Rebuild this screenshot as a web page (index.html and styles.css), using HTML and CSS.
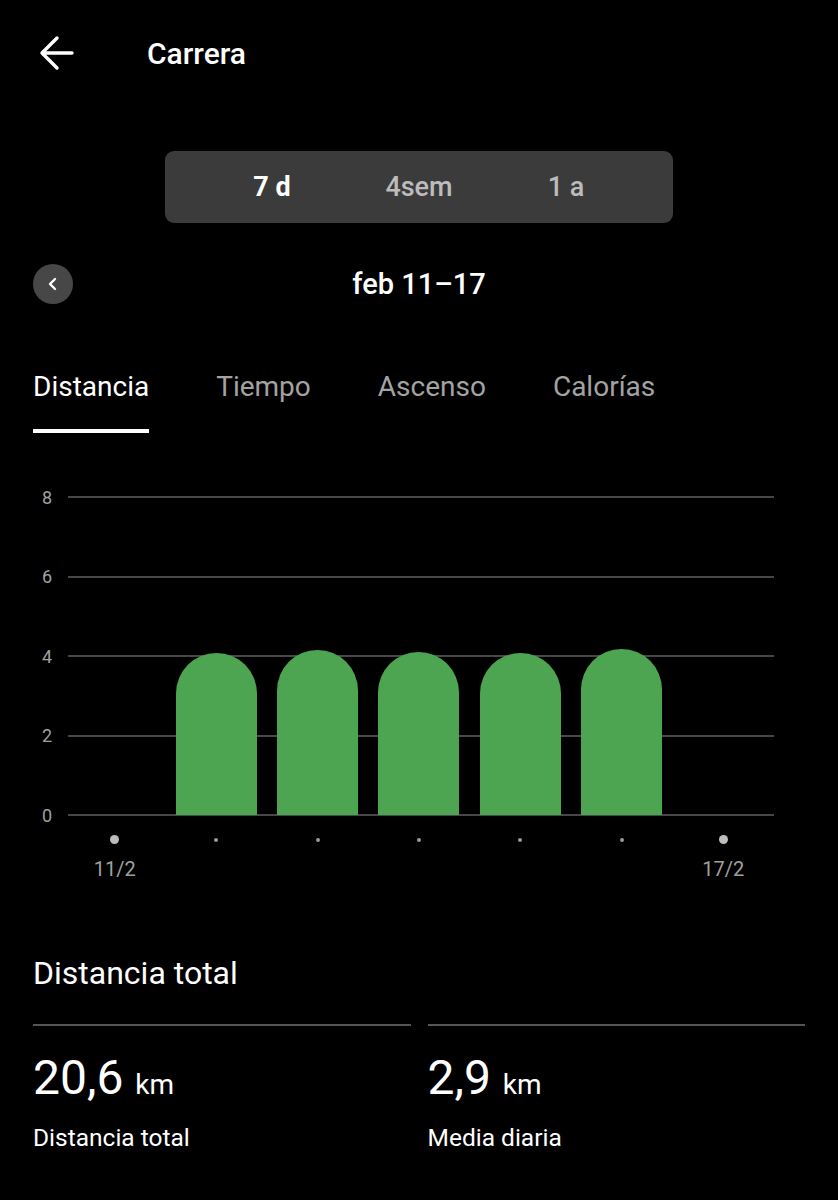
FILE: index.html
```html
<!DOCTYPE html>
<html lang="es">
<head>
    <meta charset="UTF-8">
    <meta name="viewport" content="width=device-width, initial-scale=1.0">
    <title>Carrera</title>
    <link rel="stylesheet" href="styles.css">
</head>
<body>
    <div id="cabecera">
        <svg class="atras" width="36" height="36" viewBox="0 0 36 36">
            <path d="M33 18 H3 M18 3 L3 18 L18 33" fill="none" stroke="#fff" stroke-width="3.4" stroke-linecap="round" stroke-linejoin="round"/>
        </svg>
        <h1>Carrera</h1>
    </div>

    <div id="periodos">
        <div class="periodo activo">7 d</div>
        <div class="periodo">4sem</div>
        <div class="periodo">1 a</div>
    </div>

    <div id="fecha">
        <div class="circulo">
            <svg width="14" height="14" viewBox="0 0 14 14">
                <path d="M9 2 L4 7 L9 12" fill="none" stroke="#fff" stroke-width="2.4" stroke-linecap="round" stroke-linejoin="round"/>
            </svg>
        </div>
        <div class="rango">feb 11–17</div>
        <div></div>
    </div>

    <div id="pestanas">
        <div class="pestana activa">Distancia</div>
        <div class="pestana">Tiempo</div>
        <div class="pestana">Ascenso</div>
        <div class="pestana">Calorías</div>
    </div>

    <!-- Gráfico de barras -->
    <div id="grafico">
        <div class="lineas">
            <div class="linea"><span class="eje">8</span><span class="trazo"></span></div>
            <div class="linea"><span class="eje">6</span><span class="trazo"></span></div>
            <div class="linea"><span class="eje">4</span><span class="trazo"></span></div>
            <div class="linea"><span class="eje">2</span><span class="trazo"></span></div>
            <div class="linea"><span class="eje">0</span><span class="trazo"></span></div>
        </div>
        <div class="barras">
            <div class="col"></div>
            <div class="col"><div class="barra" style="height: 162px"></div></div>
            <div class="col"><div class="barra" style="height: 165px"></div></div>
            <div class="col"><div class="barra" style="height: 163px"></div></div>
            <div class="col"><div class="barra" style="height: 162px"></div></div>
            <div class="col"><div class="barra" style="height: 166px"></div></div>
            <div class="col"></div>
        </div>
    </div>

    <div class="dias puntos">
        <span><i class="punto grande"></i></span>
        <span><i class="punto"></i></span>
        <span><i class="punto"></i></span>
        <span><i class="punto"></i></span>
        <span><i class="punto"></i></span>
        <span><i class="punto"></i></span>
        <span><i class="punto grande"></i></span>
    </div>
    <div class="dias etiquetas">
        <span>11/2</span>
        <span></span>
        <span></span>
        <span></span>
        <span></span>
        <span></span>
        <span>17/2</span>
    </div>

    <h2>Distancia total</h2>
    <div id="resumen">
        <div class="dato">
            <div class="valor">20,6 <small>km</small></div>
            <div class="nombre">Distancia total</div>
        </div>
        <div class="dato">
            <div class="valor">2,9 <small>km</small></div>
            <div class="nombre">Media diaria</div>
        </div>
    </div>
</body>
</html>
```

FILE: styles.css
```css
body {
    margin: 0;
    background: #000;
    color: #fff;
    font-family: Roboto, 'Noto Sans', sans-serif;
}

#cabecera {
    display: flex;
    align-items: center;
    height: 106px;
    padding-left: 39px;
}

#cabecera h1 {
    margin: 0 0 0 72px;
    font-size: 30px;
    font-weight: 500;
}

/* Selector de periodo */
#periodos {
    display: grid;
    grid-template-columns: repeat(3, 147px);
    justify-content: center;
    align-items: center;
    width: 508px;
    height: 72px;
    margin: 45px auto 0;
    background: #3b3b3b;
    border-radius: 9px;
}

.periodo {
    text-align: center;
    font-size: 27px;
    font-weight: 500;
    color: #bcbcbc;
}

.periodo.activo { color: #fff; font-weight: 700; }

#fecha {
    display: grid;
    grid-template-columns: 1fr auto 1fr;
    align-items: center;
    margin-top: 41px;
    padding: 0 33px;
}

.circulo {
    display: flex;
    justify-content: center;
    align-items: center;
    width: 40px;
    height: 40px;
    border-radius: 50%;
    background: #474747;
}

.rango { font-size: 29px; font-weight: 500; }

/* Pestañas */
#pestanas {
    display: flex;
    gap: 67px;
    margin-top: 66px;
    padding-left: 33px;
}

.pestana {
    font-size: 28px;
    line-height: 34px;
    color: #a3a3a3;
    padding-bottom: 25px;
    border-bottom: 4px solid transparent;
}

.pestana.activa { color: #fff; border-bottom-color: #fff; }

/* Gráfico */
#grafico {
    position: relative;
    height: 320px;
    margin-top: 63px;
}

.lineas {
    display: flex;
    flex-direction: column;
    justify-content: space-between;
    height: 100%;
    padding-right: 64px;
}

.linea {
    display: flex;
    align-items: center;
    height: 2px;
}

.eje {
    width: 28px;
    margin: 0 7px 0 33px;
    text-align: center;
    font-size: 18px;
    color: #a0a0a0;
}

.trazo {
    flex: 1;
    height: 2px;
    background: #474747;
}

.barras {
    position: absolute;
    top: 0;
    bottom: 1px;
    left: 64px;
    right: 64px;
    display: grid;
    grid-template-columns: repeat(7, 1fr);
}

.col {
    display: flex;
    justify-content: center;
    align-items: flex-end;
}

.barra {
    width: 81px;
    background: #4da451;
    border-radius: 40.5px 40.5px 0 0;
}

.dias {
    display: grid;
    grid-template-columns: repeat(7, 1fr);
    margin: 0 64px;
    text-align: center;
}

.puntos { margin-top: 13px; height: 10px; align-items: center; }

.punto {
    display: inline-block;
    width: 4px;
    height: 4px;
    border-radius: 50%;
    background: #9a9a9a;
    vertical-align: middle;
}

.punto.grande { width: 9px; height: 9px; background: #bdbdbd; }

.etiquetas {
    margin-top: 18px;
    font-size: 20px;
    color: #a0a0a0;
}

h2 {
    margin: 73px 0 0;
    padding-left: 33px;
    font-size: 32px;
    font-weight: 400;
}

#resumen {
    display: grid;
    grid-template-columns: 1fr 1fr;
    gap: 17px;
    margin-top: 32px;
    padding: 0 33px;
}

.dato {
    border-top: 2px solid #555;
    padding-top: 24px;
}

.valor {
    font-size: 48px;
    line-height: 56px;
}

.valor small { font-size: 28px; }

.nombre {
    margin-top: 10px;
    font-size: 24.5px;
}
```
